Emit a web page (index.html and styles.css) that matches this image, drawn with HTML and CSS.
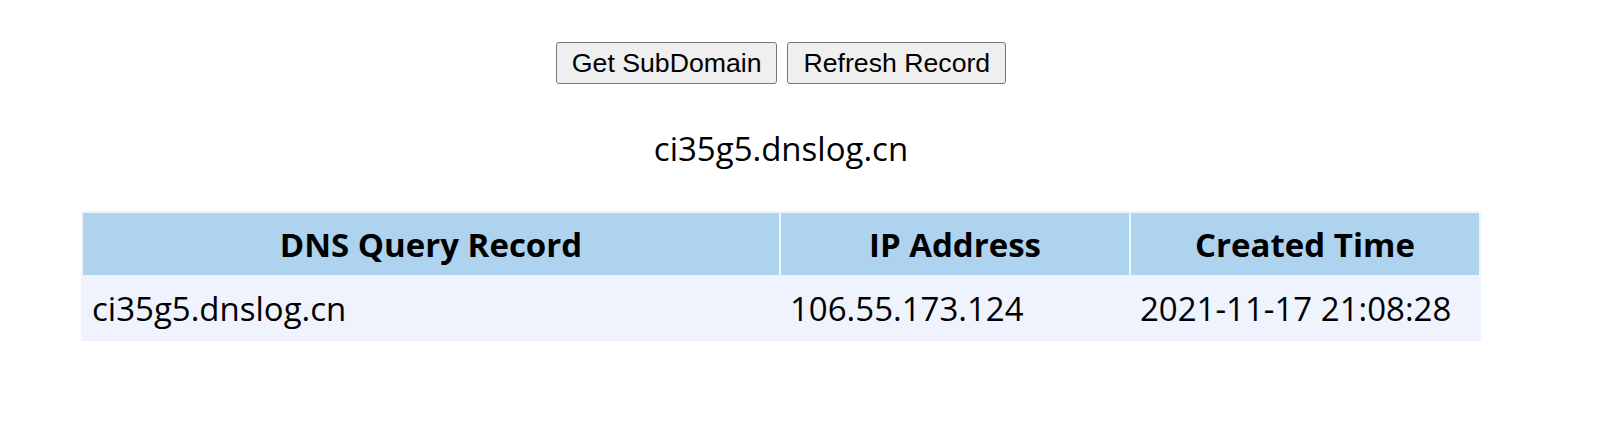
FILE: index.html
```html
<!DOCTYPE html>
<html>
<head>
<meta charset="utf-8">
<link rel="stylesheet" href="styles.css">
<title>DNSLog</title>
</head>
<body>
<div class="page">
  <div class="actions">
    <button class="btn">Get SubDomain</button>
    <button class="btn">Refresh Record</button>
  </div>
  <div class="domain">ci35g5.dnslog.cn</div>
  <table class="records">
    <thead>
      <tr>
        <th class="col-query">DNS Query Record</th>
        <th class="col-ip">IP Address</th>
        <th class="col-time">Created Time</th>
      </tr>
    </thead>
    <tbody>
      <tr>
        <td>ci35g5.dnslog.cn</td>
        <td>106.55.173.124</td>
        <td>2021-11-17 21:08:28</td>
      </tr>
    </tbody>
  </table>
</div>
</body>
</html>
```
FILE: styles.css
```css
html, body {
  margin: 0;
  padding: 0;
  background: #ffffff;
}
body {
  font-family: "Open Sans", "Noto Sans", sans-serif;
  color: #000;
}
.page {
  width: 1530px;
  margin-left: 16px;
  padding-top: 42px;
  display: flex;
  flex-direction: column;
  align-items: center;
}
.actions {
  display: flex;
  gap: 10px;
  justify-content: center;
}
.btn {
  font-family: "Liberation Sans", Arial, sans-serif;
  font-size: 26.67px;
  height: 42px;
  padding: 0 15px;
  background: #efefef;
  border: 1px solid #767676;
  border-radius: 3px;
  color: #000;
}
.domain {
  margin-top: 43px;
  font-size: 33px;
  line-height: 44px;
  height: 44px;
}
.records {
  margin-top: 40px;
  width: 1400px;
  border-collapse: separate;
  border-spacing: 2px;
  background: #eef3fd;
  font-size: 33px;
}
.records th {
  background: #aed3ef;
  font-weight: 700;
  height: 62px;
  padding: 0 10px;
  text-align: center;
}
.records td {
  height: 62px;
  padding: 0 9px;
  text-align: left;
}
.col-query { width: 50%; }
.col-ip, .col-time { width: 25%; }
```
